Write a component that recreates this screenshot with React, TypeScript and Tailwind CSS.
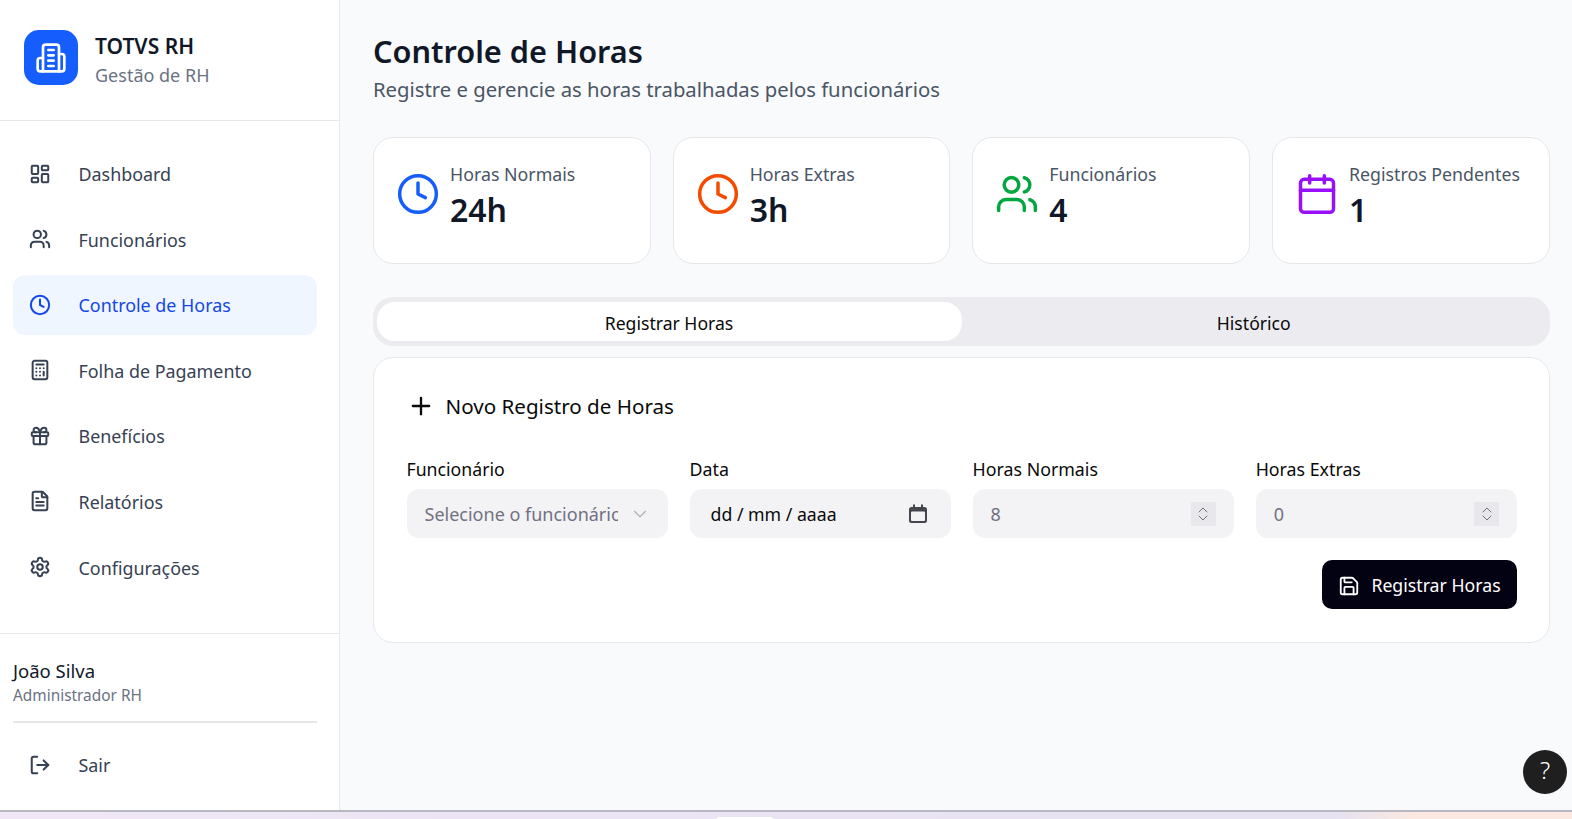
import React from "react";
import {
  Calculator,
  Calendar,
  ChevronDown,
  ChevronUp,
  Clock,
  FileText,
  Gift,
  LayoutDashboard,
  LogOut,
  Plus,
  Save,
  Settings,
  Users,
} from "lucide-react";

const navItems = [
  { label: "Dashboard", icon: LayoutDashboard },
  { label: "Funcionários", icon: Users },
  { label: "Controle de Horas", icon: Clock, active: true },
  { label: "Folha de Pagamento", icon: Calculator },
  { label: "Benefícios", icon: Gift },
  { label: "Relatórios", icon: FileText },
  { label: "Configurações", icon: Settings },
];

const stats = [
  { label: "Horas Normais", value: "24h", icon: Clock, color: "text-[#155dfc]" },
  { label: "Horas Extras", value: "3h", icon: Clock, color: "text-[#f54a00]" },
  { label: "Funcionários", value: "4", icon: Users, color: "text-[#00a63e]" },
  { label: "Registros Pendentes", value: "1", icon: Calendar, color: "text-[#9810fa]" },
];

// older lucide Building2, the package's current one has a door
function LogoIcon() {
  return (
    <svg width="32" height="32" viewBox="0 0 24 24" fill="none" stroke="currentColor" strokeWidth="2" strokeLinecap="round" strokeLinejoin="round">
      <path d="M6 22V4a2 2 0 0 1 2-2h8a2 2 0 0 1 2 2v18Z" />
      <path d="M6 12H4a2 2 0 0 0-2 2v6a2 2 0 0 0 2 2h2" />
      <path d="M18 9h2a2 2 0 0 1 2 2v9a2 2 0 0 1-2 2h-2" />
      <path d="M10 6h4" />
      <path d="M10 10h4" />
      <path d="M10 14h4" />
      <path d="M10 18h4" />
    </svg>
  );
}

// native date input picker glyph
function DateGlyph() {
  return (
    <svg width="20" height="20" viewBox="0 0 20 20" className="text-[#45454d]">
      <path d="M5 0.5h2v2.5h6V0.5h2v2.5h1.5A2.5 2.5 0 0 1 19 5.5v11a2.5 2.5 0 0 1-2.5 2.5h-13A2.5 2.5 0 0 1 1 16.5v-11A2.5 2.5 0 0 1 3.5 3H5Z" fill="currentColor" />
      <rect x="3" y="7.5" width="14" height="9.5" rx="1" fill="#f3f3f5" />
    </svg>
  );
}

function NumberField({ label, value }: { label: string; value: string }) {
  return (
    <div className="flex flex-col gap-[9px]">
      <label className="text-[17.8px] leading-[22px] text-[#0a0a0a]">{label}</label>
      <div className="h-[49px] rounded-[12px] bg-[#f3f3f5] pl-[18px] pr-[18px] flex items-center justify-between">
        <span className="text-[18px] pt-[2px] text-[#717182]">{value}</span>
        <div className="w-[25px] h-[24px] bg-[#e8e8ec] flex flex-col items-center justify-center text-[#71717a]">
          <ChevronUp size={18} strokeWidth={1.5} className="-mb-[4px]" />
          <ChevronDown size={18} strokeWidth={1.5} className="-mt-[4px]" />
        </div>
      </div>
    </div>
  );
}

export default function App() {
  return (
    <div className="h-screen w-full flex flex-col overflow-hidden font-['Noto_Sans',sans-serif] relative">
      <div className="h-[810px] flex shrink-0 bg-[#f9fafb]">
        <aside className="w-[340px] shrink-0 bg-white border-r border-[#e5e7eb] flex flex-col">
          <div className="h-[121px] shrink-0 border-b border-[#e5e7eb] pl-[24px] pt-[30px] flex items-start gap-[17px]">
            <div className="w-[54px] h-[55px] rounded-[15px] bg-[#155dfc] flex items-center justify-center text-white">
              <LogoIcon />
            </div>
            <div className="flex flex-col">
              <span className="text-[21px] leading-[32px] font-semibold text-[#101828]">TOTVS RH</span>
              <span className="text-[18px] leading-[26px] text-[#6a7282]">Gestão de RH</span>
            </div>
          </div>

          <nav className="flex-1 pl-[13px] pt-[22.5px] flex flex-col gap-[5.6px] w-[317px]">
            {navItems.map((item) => (
              <div
                key={item.label}
                className={
                  item.active
                    ? "h-[60px] rounded-[12px] bg-[#eff6ff] text-[#1447e6] flex items-center pl-[16px] gap-[27.5px]"
                    : "h-[60px] rounded-[12px] text-[#364153] flex items-center pl-[16px] gap-[27.5px]"
                }
              >
                <item.icon size={22} strokeWidth={2.2} />
                <span className="text-[17.9px] pt-[2px]">{item.label}</span>
              </div>
            ))}
          </nav>

          <div className="shrink-0 h-[177px] border-t border-[#e5e7eb] px-[13px] pt-[22px]">
            <div className="text-[18.5px] leading-[29px] text-[#101828]">João Silva</div>
            <div className="text-[15.4px] leading-[22px] text-[#6a7282]">Administrador RH</div>
            <div className="w-[304px] h-[2px] bg-[#e5e7eb] mt-[14px]" />
            <div className="h-[60px] mt-[12px] flex items-center pl-[16px] gap-[27.5px] text-[#364153]">
              <LogOut size={22} strokeWidth={2.2} />
              <span className="text-[17.9px]">Sair</span>
            </div>
          </div>
        </aside>

        <main className="flex-1 pl-[33px] pr-[22.5px] pt-[28px]">
          <h1 className="text-[30.7px] leading-[46px] font-semibold text-[#101828]">Controle de Horas</h1>
          <p className="text-[20.3px] leading-[30px] text-[#4a5565]">Registre e gerencie as horas trabalhadas pelos funcionários</p>

          <div className="grid grid-cols-4 gap-[22px] mt-[33px]">
            {stats.map((s) => (
              <div key={s.label} className="h-[127px] rounded-[20px] bg-white border border-[#e5e7eb] flex pl-[22px] pt-[23px] gap-[10px]">
                <s.icon size={44} strokeWidth={1.9} className={`${s.color} mt-[10.5px]`} />
                <div className="flex flex-col">
                  <span className="text-[17.8px] leading-[26px] text-[#4a5565]">{s.label}</span>
                  <span className="text-[32px] leading-[46px] font-semibold text-[#101828]">{s.value}</span>
                </div>
              </div>
            ))}
          </div>

          <div className="mt-[33px] h-[49px] rounded-[20px] bg-[#ececf0] px-[3.5px] py-[5px] grid grid-cols-[585px_1fr]">
            <div className="rounded-[18px] bg-white flex items-center justify-center pt-[4px] text-[17.6px] text-[#0a0a0a]">Registrar Horas</div>
            <div className="flex items-center justify-center pt-[4px] text-[17.6px] text-[#0a0a0a]">Histórico</div>
          </div>

          <section className="mt-[11px] h-[286px] rounded-[20px] bg-white border border-[#e5e7eb] pl-[32.5px] pr-[31.5px] pt-[30px]">
            <div className="flex items-center gap-[11px] h-[36px] text-[#0a0a0a]">
              <Plus size={28} strokeWidth={2} />
              <h2 className="text-[20.6px]">Novo Registro de Horas</h2>
            </div>

            <div className="grid grid-cols-4 gap-[21.7px] mt-[34px]">
              <div className="flex flex-col gap-[9px]">
                <label className="text-[17.7px] leading-[22px] text-[#0a0a0a]">Funcionário</label>
                <div className="h-[49px] rounded-[12px] bg-[#f3f3f5] pl-[18px] pr-[17px] flex items-center gap-[11px]">
                  <span className="flex-1 overflow-hidden whitespace-nowrap pt-[2px] text-[18px] text-[#717182]">Selecione o funcionário</span>
                  <ChevronDown size={22} strokeWidth={1.5} className="text-[#b4b4bd] shrink-0" />
                </div>
              </div>
              <div className="flex flex-col gap-[9px]">
                <label className="text-[17.8px] leading-[22px] text-[#0a0a0a]">Data</label>
                <div className="h-[49px] rounded-[12px] bg-[#f3f3f5] pl-[21px] pr-[23px] flex items-center justify-between text-[#0a0a0a]">
                  <span className="text-[17.7px] pt-[2px]">dd / mm / aaaa</span>
                  <DateGlyph />
                </div>
              </div>
              <NumberField label="Horas Normais" value="8" />
              <NumberField label="Horas Extras" value="0" />
            </div>

            <div className="flex justify-end mt-[22px]">
              <button className="w-[195px] h-[49px] rounded-[10px] bg-[#030213] text-white pt-[2px] flex items-center justify-center gap-[11px]">
                <Save size={22} strokeWidth={2} />
                <span className="text-[17.7px]">Registrar Horas</span>
              </button>
            </div>
          </section>
        </main>
      </div>

      <div className="h-[2px] shrink-0 bg-[#b8b8c0]" />
      <div className="flex-1 bg-gradient-to-r from-[#f0e6f6] via-[#e6e2f2] via-85% to-[#fbe8e0] to-90%" />

      {/* bit of the taskbar peeking out at the bottom edge */}
      <div className="absolute left-[717px] bottom-0 w-[56px] h-[2px] rounded-t-[2px] bg-white" />

      <button className="absolute left-[1523px] top-[750px] w-[44px] h-[44px] rounded-full bg-[#1f1f1f] text-white text-[24px] font-light pb-[4px] flex items-center justify-center">
        ?
      </button>
    </div>
  );
}
